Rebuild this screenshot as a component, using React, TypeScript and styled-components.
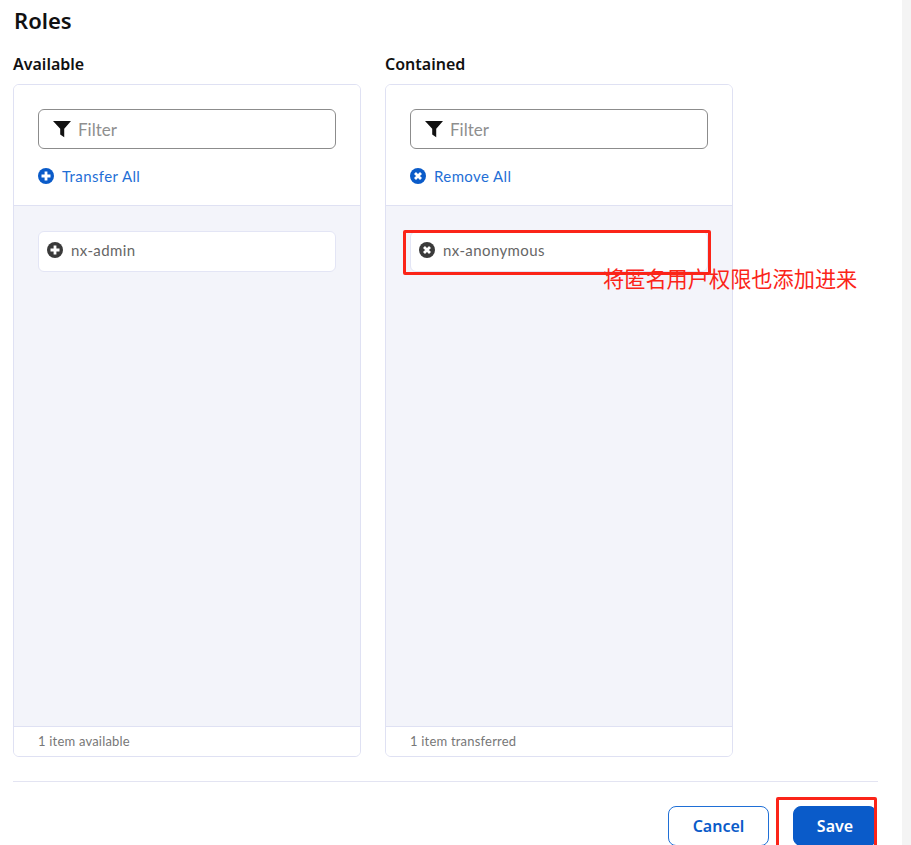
import React from 'react';
import styled, { createGlobalStyle } from 'styled-components';

const GlobalStyle = createGlobalStyle`
  html, body {
    margin: 0;
    padding: 0;
    height: 845px;
    overflow: hidden;
    background: #ffffff;
    font-family: 'Lato', 'Liberation Sans', sans-serif;
  }
  * {
    box-sizing: border-box;
  }
`;

const Page = styled.div`
  position: relative;
  width: 911px;
  height: 845px;
  display: flex;
  overflow: hidden;
`;

const Content = styled.main`
  width: 902px;
  padding: 5px 24px 0 13px;
`;

const ScrollTrack = styled.div`
  width: 9px;
  background: #f4f4f4;
`;

const Title = styled.h2`
  margin: 0;
  height: 30px;
  padding-left: 1px;
  font: 600 22px/30px 'Noto Sans', sans-serif;
  color: #111111;
`;

const Columns = styled.div`
  display: flex;
  gap: 24px;
  margin-top: 18px;
`;

const Column = styled.section`
  width: 348px;
`;

const ColumnLabel = styled.h3`
  margin: 0 0 9px;
  height: 22px;
  font: 600 16px/22px 'Noto Sans', sans-serif;
  color: #111111;
`;

const Panel = styled.div`
  height: 673px;
  display: flex;
  flex-direction: column;
  border: 1px solid #dfe1f3;
  border-radius: 6px;
  overflow: hidden;
`;

const PanelHeader = styled.div`
  height: 121px;
  padding: 24px 24px 0;
  border-bottom: 1px solid #dfe1f3;
  background: #ffffff;
`;

const FilterBox = styled.div`
  height: 40px;
  display: flex;
  align-items: center;
  gap: 7px;
  padding-left: 14px;
  border: 1px solid #8c8c8c;
  border-radius: 6px;
  font-size: 17px;
  color: #8f8f8f;
  background: #ffffff;
`;

const BulkAction = styled.a`
  display: flex;
  align-items: center;
  gap: 8px;
  height: 22px;
  margin-top: 16px;
  font-size: 15px;
  letter-spacing: 0.4px;
  color: #1f6fd6;
`;

const ItemList = styled.div`
  flex: 1;
  padding: 25px 24px 0;
  background: #f3f4fa;
`;

const Item = styled.div`
  height: 41px;
  display: flex;
  align-items: center;
  gap: 8px;
  padding: 0 0 3px 8px;
  border: 1px solid #e3e5f5;
  border-radius: 6px;
  background: #ffffff;
  font-size: 15px;
  letter-spacing: 0.4px;
  color: #666666;
`;

const PanelFooter = styled.div`
  height: 30px;
  padding-left: 24px;
  border-top: 1px solid #dfe1f3;
  background: #ffffff;
  font-size: 13px;
  letter-spacing: 0.2px;
  line-height: 29px;
  color: #777777;
`;

const Actions = styled.footer`
  display: flex;
  justify-content: flex-end;
  gap: 24px;
  margin-top: 24px;
  padding-top: 24px;
  padding-right: 1px;
  border-top: 1px solid #e3e4f2;
`;

const Button = styled.button<{ $primary?: boolean }>`
  width: ${(p) => (p.$primary ? '84px' : '101px')};
  height: 40px;
  border: 1px solid ${(p) => (p.$primary ? '#0a5bc9' : '#1f6fd6')};
  border-radius: 8px;
  background: ${(p) => (p.$primary ? '#0a5bc9' : '#ffffff')};
  color: ${(p) => (p.$primary ? '#ffffff' : '#0a5bc9')};
  font: 600 16px 'Noto Sans', sans-serif;
  padding: 0;
`;

const RedBox = styled.div<{ $x: number; $y: number; $w: number; $h: number }>`
  position: absolute;
  left: ${(p) => p.$x}px;
  top: ${(p) => p.$y}px;
  width: ${(p) => p.$w}px;
  height: ${(p) => p.$h}px;
  border: 3px solid #fb2418;
  border-radius: 2px;
`;

const Note = styled.span`
  position: absolute;
  left: 603px;
  top: 264px;
  font: 400 21.2px/28px 'Noto Sans CJK SC', sans-serif;
  color: #fb2418;
  white-space: nowrap;
`;

function FilterIcon() {
  return (
    <svg width="18" height="18" viewBox="0 0 17 17">
      <path d="M0 1h17l-6.4 7.2v8l-3.8-2.6v-5.4z" fill="#111111" />
    </svg>
  );
}

function RoundIcon({ kind, color }: { kind: 'plus' | 'cross'; color: string }) {
  return (
    <svg width="16" height="16" viewBox="0 0 16 16">
      <circle cx="8" cy="8" r="8" fill={color} />
      <path
        d={kind === 'plus' ? 'M8 3.5v9M3.5 8h9' : 'M5 5l6 6M11 5l-6 6'}
        stroke="#ffffff"
        strokeWidth="2.8"
      />
    </svg>
  );
}

type ColumnData = {
  label: string;
  action: string;
  item: string;
  footer: string;
  kind: 'plus' | 'cross';
};

const columns: ColumnData[] = [
  {
    label: 'Available',
    action: 'Transfer All',
    item: 'nx-admin',
    footer: '1 item available',
    kind: 'plus',
  },
  {
    label: 'Contained',
    action: 'Remove All',
    item: 'nx-anonymous',
    footer: '1 item transferred',
    kind: 'cross',
  },
];

function App() {
  return (
    <Page>
      <GlobalStyle />
      <Content>
        <Title>Roles</Title>
        <Columns>
          {columns.map((c) => (
            <Column key={c.label}>
              <ColumnLabel>{c.label}</ColumnLabel>
              <Panel>
                <PanelHeader>
                  <FilterBox>
                    <FilterIcon />
                    Filter
                  </FilterBox>
                  <BulkAction>
                    <RoundIcon kind={c.kind} color="#0a5bc9" />
                    {c.action}
                  </BulkAction>
                </PanelHeader>
                <ItemList>
                  <Item>
                    <RoundIcon kind={c.kind} color="#3a3a3a" />
                    {c.item}
                  </Item>
                </ItemList>
                <PanelFooter>{c.footer}</PanelFooter>
              </Panel>
            </Column>
          ))}
        </Columns>
        <Actions>
          <Button type="button">Cancel</Button>
          <Button type="button" $primary>Save</Button>
        </Actions>
      </Content>
      <ScrollTrack />
      <RedBox $x={403} $y={230} $w={308} $h={45} />
      <RedBox $x={776} $y={797} $w={101} $h={60} />
      <Note>将匿名用户权限也添加进来</Note>
    </Page>
  );
}

export default App;
